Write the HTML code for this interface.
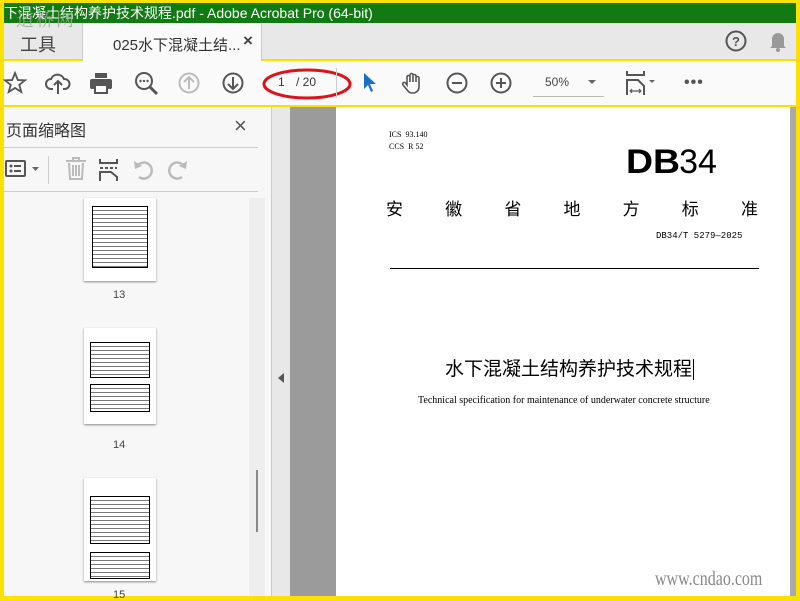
<!DOCTYPE html>
<html><head><meta charset="utf-8"><style>
*{margin:0;padding:0;box-sizing:border-box}
body{width:800px;height:600px;background:#fae100;position:relative;overflow:hidden;font-family:"Liberation Sans","Noto Sans CJK SC",sans-serif}
.a{position:absolute}
svg{position:absolute;overflow:visible}
.thumb{position:absolute;left:84px;width:72px;background:#fff;box-shadow:0 1px 2px #888}
.tb{position:absolute;border:1.5px solid #000;background:repeating-linear-gradient(#fff 0 3px,#777 3px 4px)}
</style></head><body>
<div class="a" style="left:4px;top:3px;width:792px;height:20px;background:#117a12;color:#fff;font-size:14px;line-height:20px;white-space:nowrap;overflow:hidden">下混凝土结构养护技术规程.pdf - Adobe Acrobat Pro (64-bit)</div>
<div class="a" style="left:4px;top:23px;width:792px;height:37px;background:#e8e8e8;border-bottom:1px solid #ccc"></div>
<div class="a" style="left:82px;top:23px;width:180px;height:38px;background:#fafafa;border-left:1px solid #ccc;border-right:1px solid #ccc"></div>
<div class="a" style="left:16px;top:6px;color:#9aa89a;font-size:18px;letter-spacing:2px;font-family:'Noto Serif CJK SC',serif;opacity:.85">道桥网</div>
<div class="a" style="left:20px;top:31px;font-size:18px;color:#444">工具</div>
<div class="a" style="left:113px;top:34px;font-size:15px;color:#333">025水下混凝土结...</div>
<div class="a" style="left:243px;top:31px;font-size:17px;color:#444;font-weight:bold">×</div>
<svg style="left:725px;top:30px" width="22" height="22"><circle cx="11" cy="11" r="9.5" fill="none" stroke="#555" stroke-width="2"/><text x="11" y="16" font-size="13" font-weight="bold" text-anchor="middle" fill="#555" font-family="Liberation Sans">?</text></svg>
<svg style="left:768px;top:30px" width="20" height="22"><path d="M4 16 V9 a6 6 0 0 1 12 0 V16 L18 18 H2 Z" fill="#999"/><circle cx="10" cy="20" r="2" fill="#999"/></svg>
<div class="a" style="left:4px;top:61px;width:792px;height:45px;background:#fafafa;border-bottom:1px solid #ccc"></div>
<svg style="left:4px;top:72px" width="22" height="22"><path d="M11 1 L13.8 8 L21 8.3 L15.3 12.8 L17.3 20 L11 16 L4.7 20 L6.7 12.8 L1 8.3 L8.2 8 Z" fill="none" stroke="#555" stroke-width="1.8"/></svg>
<svg style="left:45px;top:70px" width="26" height="26"><path d="M8 19 H6 a5 5 0 0 1 0-10 a7 7 0 0 1 13 0 a5 5 0 0 1 1 10 H18" fill="none" stroke="#555" stroke-width="2"/><path d="M13 24 V11 M9 15 L13 11 L17 15" fill="none" stroke="#555" stroke-width="2"/></svg>
<svg style="left:89px;top:72px" width="24" height="22"><rect x="6" y="1" width="12" height="5" fill="#555"/><rect x="1" y="7" width="22" height="10" rx="2" fill="#555"/><rect x="6" y="13" width="12" height="8" fill="#fafafa" stroke="#555" stroke-width="2"/></svg>
<svg style="left:134px;top:71px" width="26" height="26"><circle cx="10" cy="10" r="8" fill="none" stroke="#555" stroke-width="2"/><path d="M16 16 L23 23" stroke="#555" stroke-width="3"/><circle cx="6.5" cy="10" r="1.2" fill="#555"/><circle cx="10" cy="10" r="1.2" fill="#555"/><circle cx="13.5" cy="10" r="1.2" fill="#555"/></svg>
<svg style="left:178px;top:72px" width="22" height="22"><circle cx="11" cy="11" r="9.5" fill="none" stroke="#bbb" stroke-width="2"/><path d="M11 17 V5 M6 10 L11 5 L16 10" fill="none" stroke="#bbb" stroke-width="2"/></svg>
<svg style="left:222px;top:72px" width="22" height="22"><circle cx="11" cy="11" r="9.5" fill="none" stroke="#555" stroke-width="2"/><path d="M11 5 V17 M6 12 L11 17 L16 12" fill="none" stroke="#555" stroke-width="2"/></svg>
<div class="a" style="left:278px;top:75px;font-size:12px;color:#333">1</div>
<div class="a" style="left:296px;top:75px;font-size:12px;color:#333">/ 20</div>
<svg style="left:262px;top:66px" width="92" height="36"><ellipse cx="45" cy="18" rx="43" ry="14" fill="none" stroke="#d9141a" stroke-width="3"/></svg>
<div class="a" style="left:336px;top:68px;width:1px;height:30px;background:#ccc"></div>
<svg style="left:362px;top:72px" width="16" height="22"><path d="M2 1 L2 17 L6 13 L9 20 L11 19 L8 12 L14 12 Z" fill="#1a6fc9"/></svg>
<svg style="left:401px;top:71px" width="24" height="24"><path d="M6 14 V6 a1.5 1.5 0 0 1 3 0 V11 V4 a1.5 1.5 0 0 1 3 0 V11 V5 a1.5 1.5 0 0 1 3 0 V11 V7 a1.5 1.5 0 0 1 3 0 V16 a6 6 0 0 1-6 6 H11 a5 5 0 0 1-4-2 L2 14 a1.5 1.5 0 0 1 2.5-2 Z" fill="none" stroke="#555" stroke-width="1.6"/></svg>
<svg style="left:446px;top:72px" width="22" height="22"><circle cx="11" cy="11" r="9.5" fill="none" stroke="#555" stroke-width="2"/><path d="M6 11 H16" stroke="#555" stroke-width="2"/></svg>
<svg style="left:490px;top:72px" width="22" height="22"><circle cx="11" cy="11" r="9.5" fill="none" stroke="#555" stroke-width="2"/><path d="M6 11 H16 M11 6 V16" stroke="#555" stroke-width="2"/></svg>
<div class="a" style="left:545px;top:75px;font-size:12px;color:#444">50%</div>
<svg style="left:588px;top:80px" width="10" height="6"><path d="M0 0 H8 L4 4 Z" fill="#666"/></svg>
<div class="a" style="left:533px;top:96px;width:71px;height:1px;background:#bbb"></div>
<svg style="left:626px;top:70px" width="30" height="26"><path d="M1 1 V5 H18 V1" fill="none" stroke="#555" stroke-width="2"/><path d="M1 25 V10 H12 L18 16 V25" fill="none" stroke="#555" stroke-width="2"/><path d="M4 21 H15 M4 21 L6 19 M4 21 L6 23 M15 21 L13 19 M15 21 L13 23" stroke="#555" stroke-width="1.2" fill="none"/><path d="M23 10 H29 L26 13 Z" fill="#666"/></svg>
<div class="a" style="left:684px;top:74px;font-size:16px;color:#555;letter-spacing:1px;font-weight:bold">•••</div>
<div class="a" style="left:4px;top:107px;width:267px;height:489px;background:#f7f7f7"></div>
<div class="a" style="left:271px;top:107px;width:1px;height:489px;background:#ccc"></div>
<div class="a" style="left:6px;top:117px;font-size:16px;color:#333">页面缩略图</div>
<div class="a" style="left:234px;top:113px;font-size:22px;color:#555">×</div>
<div class="a" style="left:4px;top:147px;width:254px;height:1px;background:#ccc"></div>
<div class="a" style="left:4px;top:191px;width:254px;height:1px;background:#ccc"></div>
<svg style="left:5px;top:160px" width="38" height="20"><rect x="1" y="1" width="19" height="15" rx="1" fill="none" stroke="#555" stroke-width="2"/><circle cx="6" cy="6" r="1.5" fill="#555"/><circle cx="6" cy="11" r="1.5" fill="#555"/><path d="M9 6 H16 M9 11 H16" stroke="#555" stroke-width="2"/><path d="M27 7 H34 L30.5 11 Z" fill="#666"/></svg>
<div class="a" style="left:48px;top:156px;width:1px;height:28px;background:#ccc"></div>
<svg style="left:65px;top:157px" width="22" height="24"><path d="M1 4 H21 M8 4 V1 H14 V4 M4 6 L5 22 H17 L18 6 M8 8 V19 M11 8 V19 M14 8 V19" fill="none" stroke="#bbb" stroke-width="2"/></svg>
<svg style="left:99px;top:158px" width="20" height="24"><path d="M1 1 V5 H18 V1" fill="none" stroke="#555" stroke-width="2"/><path d="M1 10 H18" stroke="#555" stroke-width="2" stroke-dasharray="3 2"/><path d="M1 23 V14 H12 L18 19 V23" fill="none" stroke="#555" stroke-width="2"/></svg>
<svg style="left:132px;top:158px" width="24" height="24"><path d="M7 19 A8 8 0 1 0 6 7" fill="none" stroke="#bbb" stroke-width="2.5"/><path d="M2 3 L3 11 L10 8 Z" fill="#bbb"/></svg>
<svg style="left:165px;top:158px" width="24" height="24"><path d="M17 19 A8 8 0 1 1 18 7" fill="none" stroke="#bbb" stroke-width="2.5"/><path d="M22 3 L21 11 L14 8 Z" fill="#bbb"/></svg>
<div class="a" style="left:249px;top:198px;width:16px;height:398px;background:#eeeeee"></div>
<div class="a" style="left:256px;top:470px;width:2px;height:62px;background:#888"></div>
<div class="thumb" style="top:198px;height:83px"><div class="tb" style="left:8px;top:8px;width:56px;height:62px"></div></div>
<div class="a" style="left:113px;top:289px;font-size:11px;color:#444">13</div>
<div class="thumb" style="top:328px;height:96px"><div class="tb" style="left:6px;top:14px;width:60px;height:36px"></div><div class="tb" style="left:6px;top:56px;width:60px;height:28px"></div></div>
<div class="a" style="left:113px;top:439px;font-size:11px;color:#444">14</div>
<div class="thumb" style="top:478px;height:103px"><div class="tb" style="left:6px;top:18px;width:60px;height:48px"></div><div class="tb" style="left:6px;top:74px;width:60px;height:27px"></div></div>
<div class="a" style="left:113px;top:589px;font-size:11px;color:#444">15</div>
<div class="a" style="left:272px;top:107px;width:18px;height:489px;background:#e8e8e8"></div>
<svg style="left:278px;top:373px" width="8" height="10"><path d="M6 0 V10 L0 5 Z" fill="#555"/></svg>
<div class="a" style="left:290px;top:107px;width:46px;height:489px;background:#9b9b9b"></div>
<div class="a" style="left:336px;top:107px;width:454px;height:489px;background:#fff"></div>
<div class="a" style="left:790px;top:107px;width:6px;height:489px;background:#aaa"></div>
<div class="a" style="left:389px;top:129px;font-size:8px;color:#000;font-family:'Liberation Serif',serif;line-height:12px">ICS&nbsp; 93.140<br>CCS&nbsp; R 52</div>
<div class="a" style="left:626px;top:144px;font-size:34px;color:#000;line-height:36px;white-space:nowrap"><span style="font-weight:900;transform:scaleX(1.1);transform-origin:left;display:inline-block;margin-right:4px">DB</span>34</div>
<div class="a" style="left:386px;top:195px;width:372px;display:flex;justify-content:space-between;font-size:17px;color:#000"><span>安</span><span>徽</span><span>省</span><span>地</span><span>方</span><span>标</span><span>准</span></div>
<div class="a" style="left:656px;top:231px;font-size:9px;color:#000;font-family:'Liberation Mono',monospace">DB34/T 5279—2025</div>
<div class="a" style="left:390px;top:268px;width:369px;height:1px;background:#000"></div>
<div class="a" style="left:445px;top:354px;font-size:19px;color:#000">水下混凝土结构养护技术规程<span style="border-left:1px solid #000;margin-left:1px"></span></div>
<div class="a" style="left:418px;top:395px;font-size:10px;color:#000;font-family:'Liberation Serif',serif">Technical specification for maintenance of underwater concrete structure</div>
<div class="a" style="left:655px;top:568px;font-size:20px;color:#888;font-family:'Liberation Serif',serif;transform:scaleX(.8);transform-origin:left">www.cndao.com</div>
</body></html>
